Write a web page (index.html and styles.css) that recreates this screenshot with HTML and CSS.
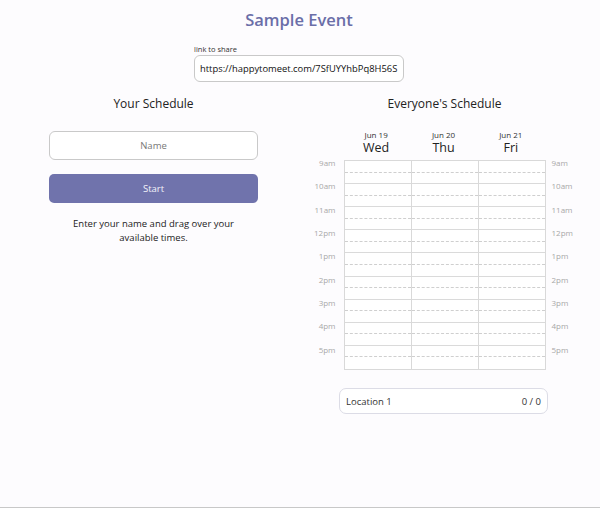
FILE: index.html
```html
<!DOCTYPE html>
<html>
<head>
<meta charset="utf-8">
<link rel="stylesheet" href="styles.css">
</head>
<body>
<div class="page">
  <header class="head">
    <h1 class="title">Sample Event</h1>
    <div class="share">
      <div class="share-label">link to share</div>
      <div class="share-box">https://happytomeet.com/7SfUYYhbPq8H56S</div>
    </div>
  </header>
  <main class="cols">
    <section class="col">
      <h2 class="col-title">Your Schedule</h2>
      <div class="name-input">Name</div>
      <button class="start">Start</button>
      <p class="hint">Enter your name and drag over your available times.</p>
    </section>
    <section class="col">
      <h2 class="col-title">Everyone's Schedule</h2>
      <div class="sched">
        <div class="days">
          <div class="day"><span class="date">Jun 19</span><span class="wd">Wed</span></div>
          <div class="day"><span class="date">Jun 20</span><span class="wd">Thu</span></div>
          <div class="day"><span class="date">Jun 21</span><span class="wd">Fri</span></div>
        </div>
        <div class="grid-row">
          <div class="times left">
            <span>9am</span><span>10am</span><span>11am</span><span>12pm</span><span>1pm</span><span>2pm</span><span>3pm</span><span>4pm</span><span>5pm</span>
          </div>
          <div class="grid">
            <div class="gcol">
              <i></i><i></i><i></i><i></i><i></i><i></i><i></i><i></i><i></i><i></i><i></i><i></i><i></i><i></i><i></i><i></i><i></i><i></i>
            </div>
            <div class="gcol">
              <i></i><i></i><i></i><i></i><i></i><i></i><i></i><i></i><i></i><i></i><i></i><i></i><i></i><i></i><i></i><i></i><i></i><i></i>
            </div>
            <div class="gcol">
              <i></i><i></i><i></i><i></i><i></i><i></i><i></i><i></i><i></i><i></i><i></i><i></i><i></i><i></i><i></i><i></i><i></i><i></i>
            </div>
          </div>
          <div class="times right">
            <span>9am</span><span>10am</span><span>11am</span><span>12pm</span><span>1pm</span><span>2pm</span><span>3pm</span><span>4pm</span><span>5pm</span>
          </div>
        </div>
        <div class="location"><span>Location 1</span><span>0 / 0</span></div>
      </div>
    </section>
  </main>
</div>
</body>
</html>
```

FILE: styles.css
```css
html, body {
  margin: 0;
  padding: 0;
  background: #fdfcfe;
}
body {
  font-family: "Open Sans", "Noto Sans", sans-serif;
  color: #333;
}
.page {
  height: 508px;
  box-sizing: border-box;
  border-bottom: 1px solid #c8c8c8;
  padding: 8px 10px 0 8px;
}
.head {
  display: flex;
  flex-direction: column;
  align-items: center;
}
.title {
  margin: 0;
  font-size: 16.5px;
  line-height: 24px;
  font-weight: 600;
  color: #6a6ea8;
}
.share {
  margin-top: 12px;
  width: 210px;
}
.share-label {
  font-size: 7.5px;
  line-height: 10px;
  color: #333;
  margin-bottom: 1px;
}
.share-box {
  box-sizing: border-box;
  height: 27px;
  border: 1px solid #c9c9c9;
  border-radius: 6px;
  background: #fff;
  font-size: 9.4px;
  line-height: 25px;
  padding-left: 5px;
  white-space: nowrap;
  overflow: hidden;
  color: #111;
}
.cols {
  display: flex;
  margin-top: 13px;
}
.col {
  flex: 1;
  display: flex;
  flex-direction: column;
  align-items: center;
}
.col-title {
  margin: 0;
  font-size: 12px;
  line-height: 18px;
  font-weight: 400;
  color: #222;
}
.name-input {
  box-sizing: border-box;
  width: 209px;
  height: 29px;
  margin-top: 18px;
  border: 1px solid #c9c9c9;
  border-radius: 6px;
  background: #fff;
  font-size: 9.5px;
  line-height: 27px;
  text-align: center;
  color: #777;
}
.start {
  width: 209px;
  height: 29px;
  margin-top: 14px;
  border: none;
  border-radius: 5px;
  background: #7073ac;
  color: #f4f4fa;
  font-family: inherit;
  font-size: 9.5px;
  padding: 0;
}
.hint {
  margin: 14px 0 0;
  width: 170px;
  font-size: 9.5px;
  line-height: 13.5px;
  text-align: center;
  color: #222;
}
.sched {
  display: flex;
  flex-direction: column;
  align-items: center;
  margin-top: 17px;
  padding-right: 2px;
}
.days {
  display: flex;
  width: 202px;
  margin-bottom: 4px;
}
.day {
  flex: 1;
  display: flex;
  flex-direction: column;
  align-items: center;
}
.date {
  font-size: 8px;
  line-height: 10px;
  color: #333;
}
.wd {
  font-size: 12.5px;
  line-height: 16px;
  color: #222;
}
.grid-row {
  display: flex;
}
.times {
  width: 30px;
  display: grid;
  grid-template-rows: repeat(9, 23.33px);
  margin-top: -3px;
  font-size: 8px;
  line-height: 12px;
  color: #a8a8a8;
}
.times.left {
  text-align: right;
  margin-right: 8px;
}
.times.right {
  text-align: left;
  margin-left: 6px;
}
.grid {
  display: flex;
  width: 202px;
  height: 210px;
  box-sizing: border-box;
  border: 1px solid #d9d9d9;
  background: #fff;
}
.gcol {
  flex: 1;
  display: grid;
  grid-template-rows: repeat(18, 1fr);
  border-left: 1px solid #d9d9d9;
}
.gcol:first-child {
  border-left: none;
}
.gcol i {
  display: block;
  border-bottom: 1px solid #dadada;
}
.gcol i:nth-child(odd) {
  border-bottom: 1px dashed #cfcfcf;
}
.gcol i:last-child {
  border-bottom: none;
}
.location {
  box-sizing: border-box;
  width: 209px;
  height: 26px;
  margin-top: 18px;
  border: 1px solid #dcdce6;
  border-radius: 7px;
  background: #fff;
  display: flex;
  justify-content: space-between;
  align-items: center;
  padding: 0 6px 0 6px;
  font-size: 9.5px;
  color: #333;
}
```
